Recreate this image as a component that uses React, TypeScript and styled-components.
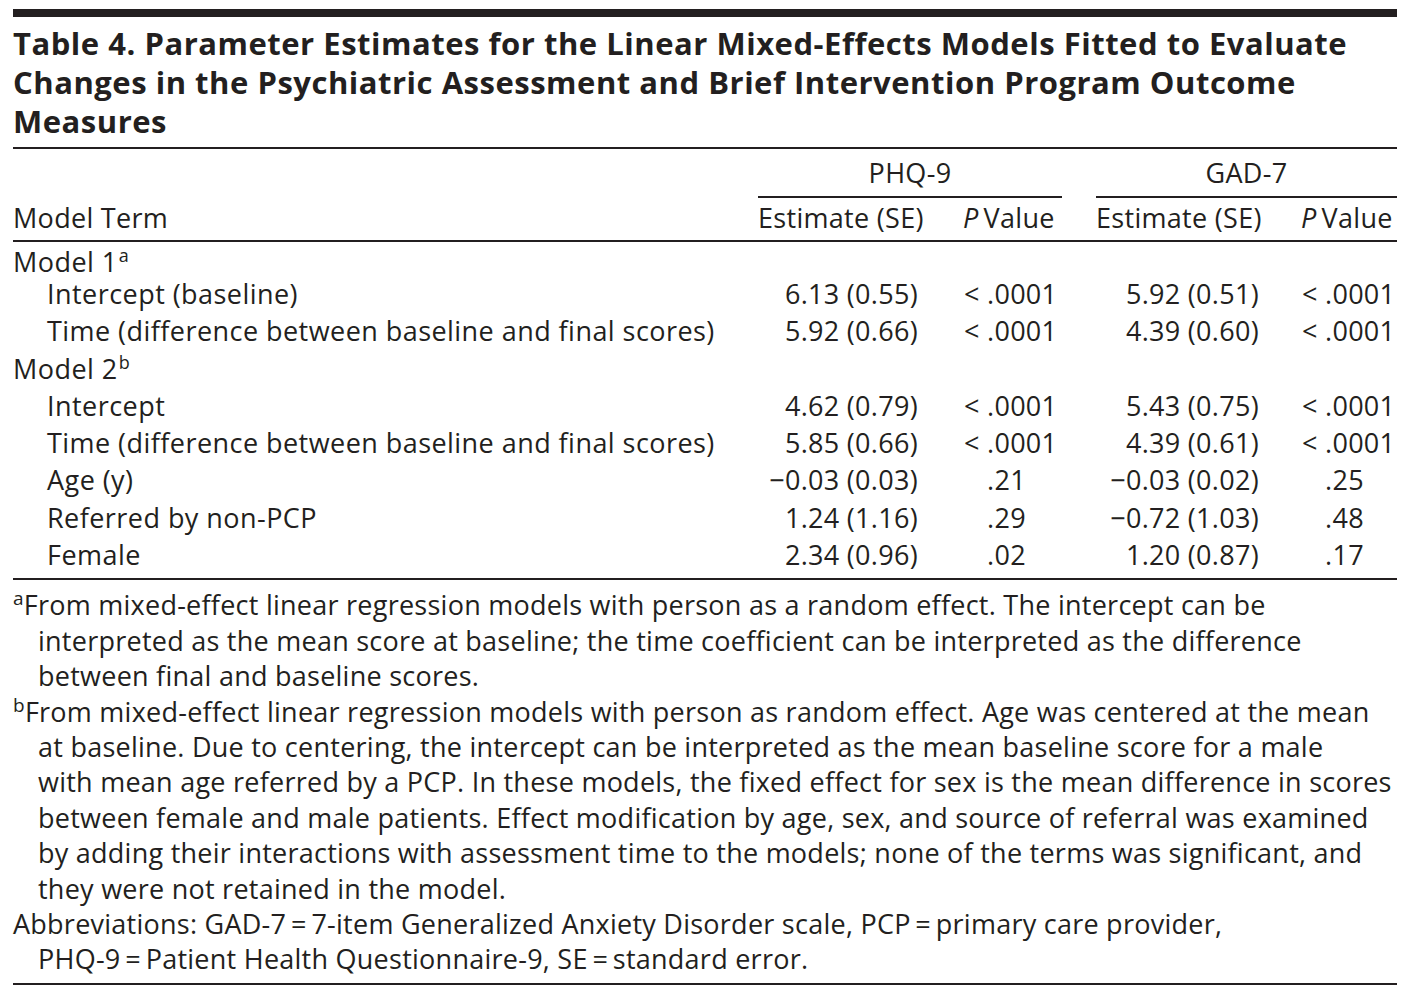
import React from "react";
import styled, { createGlobalStyle } from "styled-components";

const GlobalStyle = createGlobalStyle`
  html, body {
    margin: 0;
    padding: 0;
    background: #ffffff;
  }
  body {
    font-family: "Open Sans", Lato, Arial, sans-serif;
    color: #231f20;
  }
`;

const Page = styled.div`
  width: 1384px;
  padding: 9px 13px 0;
`;

const Rule = styled.div<{ weight: number }>`
  height: ${({ weight }) => weight}px;
  background: #231f20;
`;

const Title = styled.h1`
  margin: 7px 0 6px;
  font-size: 31px;
  line-height: 39px;
  font-weight: 700;
  letter-spacing: 0.52px;
  white-space: nowrap;
  span {
    display: block;
  }
`;

const Grid = styled.div`
  display: grid;
  grid-template-columns: 745px 171px 133px 34px 174px 127px;
  font-size: 27px;
  letter-spacing: 0.3px;
`;

const Spanner = styled.div<{ col: number }>`
  grid-column: ${({ col }) => `${col} / span 2`};
  text-align: center;
  line-height: 37px;
  padding: 5px 0 5px;
  border-bottom: 2px solid #231f20;
`;

const HeadCell = styled.div<{ pad?: number }>`
  line-height: 37px;
  padding: 1px 0 4px ${({ pad }) => pad || 0}px;
  white-space: nowrap;
  em {
    font-style: italic;
    margin-right: 5px;
  }
`;

const HeadLine = styled.div`
  grid-column: 1 / -1;
  height: 2px;
  background: #231f20;
  margin-bottom: 3px;
`;

const Label = styled.div<{ indent?: boolean; tight?: boolean }>`
  grid-column: 1;
  line-height: ${({ tight }) => (tight ? 26 : 37.3)}px;
  padding-top: ${({ tight }) => (tight ? 4 : 0)}px;
  padding-left: ${({ indent }) => (indent ? 34 : 0)}px;
  letter-spacing: 0.45px;
  white-space: nowrap;
  sup {
    font-size: 18px;
    line-height: 0;
    vertical-align: 10px;
    margin-left: 1px;
  }
`;

const Spacer = styled.div`
  grid-column: 2 / -1;
`;

const Est = styled.div<{ col: number }>`
  grid-column: ${({ col }) => col};
  line-height: 37.3px;
  text-align: right;
  padding-right: 11px;
  white-space: nowrap;
`;

const PVal = styled.div<{ col: number; pad: number }>`
  grid-column: ${({ col }) => col};
  line-height: 37.3px;
  padding-left: ${({ pad }) => pad}px;
  display: flex;
  white-space: nowrap;
`;

const Lt = styled.span`
  width: 23px;
  flex: none;
`;

const BodyEnd = styled.div`
  grid-column: 1 / -1;
  height: 5px;
`;

const Notes = styled.div`
  padding: 7px 0 6px;
  font-size: 27px;
  line-height: 35.4px;
  letter-spacing: 0.25px;
`;

const Note = styled.div`
  padding-left: 25px;
  white-space: nowrap;
  sup {
    font-size: 19px;
    line-height: 0;
    vertical-align: 10px;
  }
`;

const NoteLine = styled.div<{ lead: boolean }>`
  margin-left: ${({ lead }) => (lead ? -25 : 0)}px;
`;

type Row = {
  term: string;
  group?: string;
  phq?: [string, string];
  gad?: [string, string];
};

const rows: Row[] = [
  { term: "Model 1", group: "a" },
  { term: "Intercept (baseline)", phq: ["6.13 (0.55)", "<.0001"], gad: ["5.92 (0.51)", "<.0001"] },
  {
    term: "Time (difference between baseline and final scores)",
    phq: ["5.92 (0.66)", "<.0001"],
    gad: ["4.39 (0.60)", "<.0001"],
  },
  { term: "Model 2", group: "b" },
  { term: "Intercept", phq: ["4.62 (0.79)", "<.0001"], gad: ["5.43 (0.75)", "<.0001"] },
  {
    term: "Time (difference between baseline and final scores)",
    phq: ["5.85 (0.66)", "<.0001"],
    gad: ["4.39 (0.61)", "<.0001"],
  },
  { term: "Age (y)", phq: ["\u22120.03 (0.03)", ".21"], gad: ["\u22120.03 (0.02)", ".25"] },
  { term: "Referred by non-PCP", phq: ["1.24 (1.16)", ".29"], gad: ["\u22120.72 (1.03)", ".48"] },
  { term: "Female", phq: ["2.34 (0.96)", ".02"], gad: ["1.20 (0.87)", ".17"] },
];

const notes: { mark?: string; lines: string[] }[] = [
  {
    mark: "a",
    lines: [
      "From mixed-effect linear regression models with person as a random effect. The intercept can be",
      "interpreted as the mean score at baseline; the time coefficient can be interpreted as the difference",
      "between final and baseline scores.",
    ],
  },
  {
    mark: "b",
    lines: [
      "From mixed-effect linear regression models with person as random effect. Age was centered at the mean",
      "at baseline. Due to centering, the intercept can be interpreted as the mean baseline score for a male",
      "with mean age referred by a PCP. In these models, the fixed effect for sex is the mean difference in scores",
      "between female and male patients. Effect modification by age, sex, and source of referral was examined",
      "by adding their interactions with assessment time to the models; none of the terms was significant, and",
      "they were not retained in the model.",
    ],
  },
  {
    lines: [
      "Abbreviations: GAD-7\u2009=\u20097-item Generalized Anxiety Disorder scale, PCP\u2009=\u2009primary care provider,",
      "PHQ-9\u2009=\u2009Patient Health Questionnaire-9, SE\u2009=\u2009standard error.",
    ],
  },
];

const PCell = ({ col, pad, value }: { col: number; pad: number; value: string }) => {
  const less = value.startsWith("<");
  return (
    <PVal col={col} pad={pad}>
      <Lt>{less ? "<" : ""}</Lt>
      {less ? value.slice(1) : value}
    </PVal>
  );
};

export default function App() {
  return (
    <Page>
      <GlobalStyle />
      <Rule weight={8} />
      <Title>
        <span>Table 4. Parameter Estimates for the Linear Mixed-Effects Models Fitted to Evaluate</span>
        <span>Changes in the Psychiatric Assessment and Brief Intervention Program Outcome</span>
        <span>Measures</span>
      </Title>
      <Rule weight={2} />
      <Grid>
        <div />
        <Spanner col={2}>PHQ-9</Spanner>
        <div />
        <Spanner col={5}>GAD-7</Spanner>

        <HeadCell>Model Term</HeadCell>
        <HeadCell>Estimate (SE)</HeadCell>
        <HeadCell pad={34}>
          <em>P</em>Value
        </HeadCell>
        <div />
        <HeadCell>Estimate (SE)</HeadCell>
        <HeadCell pad={31}>
          <em>P</em>Value
        </HeadCell>
        <HeadLine />

        {rows.map((row, i) =>
          row.group ? (
            <React.Fragment key={i}>
              <Label tight={i === 0}>
                {row.term}
                <sup>{row.group}</sup>
              </Label>
              <Spacer />
            </React.Fragment>
          ) : (
            <React.Fragment key={i}>
              <Label indent>{row.term}</Label>
              <Est col={2}>{row.phq![0]}</Est>
              <PCell col={3} pad={35} value={row.phq![1]} />
              <div />
              <Est col={5}>{row.gad![0]}</Est>
              <PCell col={6} pad={32} value={row.gad![1]} />
            </React.Fragment>
          )
        )}
        <BodyEnd />
      </Grid>
      <Rule weight={2} />
      <Notes>
        {notes.map((note, i) => (
          <Note key={i}>
            {note.lines.map((line, j) => (
              <NoteLine key={j} lead={j === 0}>
                {j === 0 && note.mark && <sup>{note.mark}</sup>}
                {line}
              </NoteLine>
            ))}
          </Note>
        ))}
      </Notes>
      <Rule weight={2} />
    </Page>
  );
}
